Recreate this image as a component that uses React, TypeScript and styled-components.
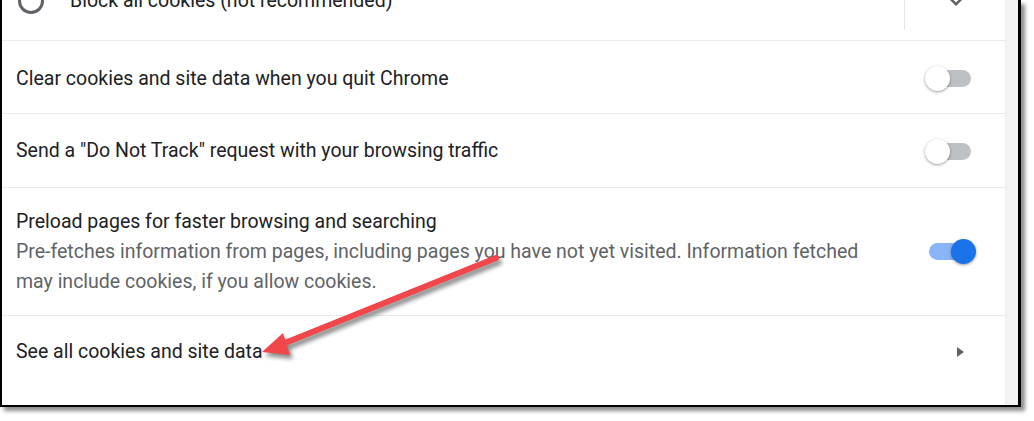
import React from "react";
import styled, { createGlobalStyle } from "styled-components";

const Global = createGlobalStyle`
  html, body { margin: 0; padding: 0; background: #ffffff; }
  body { font-family: Roboto, "Liberation Sans", Arial, sans-serif; }
`;

const Stage = styled.div`
  position: relative;
  width: 1034px;
  height: 421px;
  overflow: hidden;
  background: #ffffff;
`;

const Frame = styled.div`
  width: 1016px;
  height: 405px;
  border-left: 2px solid #000;
  border-right: 3px solid #000;
  border-bottom: 2px solid #000;
  box-shadow: 4px 4px 4px rgba(0, 0, 0, 0.45);
  display: flex;
  background: #fff;
  overflow: hidden;
`;

const Content = styled.div`
  flex: 1;
  display: flex;
  flex-direction: column;
  overflow: hidden;
`;

const Scrollbar = styled.div`
  width: 12px;
  background: #f3f4f6;
  border-left: 1px solid #eceef0;
`;

const Row = styled.div<{ $h: number; $top?: number; $pt?: number; $last?: boolean }>`
  flex: none;
  height: ${(p) => p.$h}px;
  margin-top: ${(p) => p.$top ?? 0}px;
  box-sizing: border-box;
  display: flex;
  align-items: center;
  padding: ${(p) => p.$pt ?? 0}px 34px 0 14px;
  border-bottom: ${(p) => (p.$last ? "none" : "1px solid #e8eaed")};
`;

const Label = styled.div`
  flex: 1;
  font-size: 19.5px;
  line-height: 30px;
  color: #202124;
`;

const Secondary = styled.div`
  font-size: 19.5px;
  line-height: 30px;
  color: #5f6368;
`;

const Radio = styled.div`
  width: 20px;
  height: 20px;
  border: 3px solid #5f6368;
  border-radius: 50%;
  margin: 0 26px 0 2px;
  flex: none;
`;

const RadioLabel = styled(Label)`
  flex: 1;
`;

const VSep = styled.div`
  width: 1px;
  height: 58px;
  background: #e3e5e8;
  margin-right: 36px;
  align-self: center;
`;

const Chevron = styled.svg`
  width: 30px;
  height: 30px;
  margin-right: 0;
  flex: none;
`;

const Toggle = styled.div<{ $on?: boolean }>`
  position: relative;
  flex: none;
  width: ${(p) => (p.$on ? "47px" : "46px")};
  height: 25px;
  margin-right: ${(p) => (p.$on ? "-5px" : "0")};
`;

const Track = styled.div<{ $on?: boolean }>`
  position: absolute;
  left: ${(p) => (p.$on ? "0" : "4px")};
  right: ${(p) => (p.$on ? "10px" : "0")};
  top: 4px;
  height: 17px;
  border-radius: 9px;
  background: ${(p) => (p.$on ? "#8ab4f8" : "#bdc1c6")};
`;

const Knob = styled.div<{ $on?: boolean }>`
  position: absolute;
  top: 0;
  left: ${(p) => (p.$on ? "22px" : "0")};
  width: 25px;
  height: 25px;
  border-radius: 50%;
  background: ${(p) => (p.$on ? "#1a73e8" : "#ffffff")};
  box-shadow: 0 1px 3px rgba(0, 0, 0, 0.4);
`;

const Column = styled.div`
  flex: 1;
  display: flex;
  flex-direction: column;
`;

const ArrowIcon = styled.svg`
  width: 10px;
  height: 12px;
  margin-right: 5px;
  flex: none;
`;

const Annotation = styled.svg`
  position: absolute;
  left: 0;
  top: 0;
  pointer-events: none;
`;

function Switch({ on }: { on?: boolean }) {
  return (
    <Toggle $on={on}>
      <Track $on={on} />
      <Knob $on={on} />
    </Toggle>
  );
}

export default function App() {
  return (
    <Stage>
      <Global />
      <Frame>
        <Content>
          <Row $h={80} $top={-39}>
            <Radio />
            <RadioLabel>Block all cookies (not recommended)</RadioLabel>
            <VSep />
            <Chevron viewBox="0 0 24 24">
              <path d="M7.41 8.59 12 13.17l4.59-4.58L18 10l-6 6-6-6z" fill="#5f6368" />
            </Chevron>
          </Row>
          <Row $h={73} $pt={3}>
            <Label>Clear cookies and site data when you quit Chrome</Label>
            <Switch />
          </Row>
          <Row $h={74} $pt={1}>
            <Label>Send a "Do Not Track" request with your browsing traffic</Label>
            <Switch />
          </Row>
          <Row $h={128}>
            <Column>
              <Label>Preload pages for faster browsing and searching</Label>
              <Secondary>
                Pre-fetches information from pages, including pages you have not yet visited. Information fetched
                <br />
                may include cookies, if you allow cookies.
              </Secondary>
            </Column>
            <Switch on />
          </Row>
          <Row $h={72} $last>
            <Label>See all cookies and site data</Label>
            <ArrowIcon viewBox="0 0 10 12">
              <path d="M1 1 L8 6 L1 11 Z" fill="#5f6368" />
            </ArrowIcon>
          </Row>
        </Content>
        <Scrollbar />
      </Frame>
      <Annotation width="1034" height="421" viewBox="0 0 1034 421">
        <defs>
          <filter id="sh" x="-20%" y="-20%" width="140%" height="140%">
            <feGaussianBlur stdDeviation="2" />
          </filter>
        </defs>
        <g transform="translate(3 4)" opacity="0.45" filter="url(#sh)">
          <line x1="496" y1="258" x2="280" y2="345" stroke="#000" strokeWidth="6" strokeLinecap="round" />
          <polygon points="262,352 283,333 290,355" fill="#000" />
        </g>
        <line x1="496" y1="258" x2="280" y2="345" stroke="#f1474a" strokeWidth="6" strokeLinecap="round" />
        <polygon points="262,352 283,333 290,355" fill="#f1474a" />
      </Annotation>
    </Stage>
  );
}
